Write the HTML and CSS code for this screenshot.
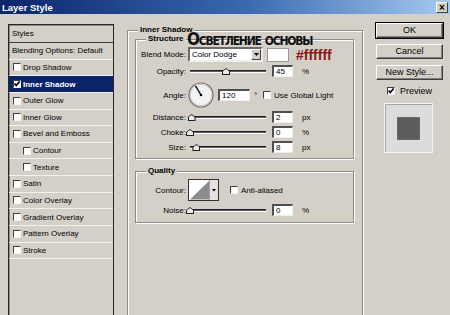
FILE: index.html
```html
<!DOCTYPE html>
<html lang="en">
<head>
    <meta charset="UTF-8">
    <title>Layer Style</title>
    <link rel="stylesheet" href="styles.css">
</head>
<body>

    <div class="titlebar">
        <span class="title">Layer Style</span>
        <span class="close-btn">&times;</span>
    </div>

    <div class="dialog">
        <div class="styles-list">
            <div class="list-head">Styles</div>
            <div class="list-row">Blending Options: Default</div>
            <div class="list-row"><span class="check"></span>Drop Shadow</div>
            <div class="list-row selected"><span class="check"><svg width="6" height="6" viewBox="0 0 6 6"><path d="M0.5 2.5 L2.3 4.6 L5.6 0.4" fill="none" stroke="#000" stroke-width="1.6"/></svg></span>Inner Shadow</div>
            <div class="list-row"><span class="check"></span>Outer Glow</div>
            <div class="list-row"><span class="check"></span>Inner Glow</div>
            <div class="list-row"><span class="check"></span>Bevel and Emboss</div>
            <div class="list-row sub"><span class="check"></span>Contour</div>
            <div class="list-row sub"><span class="check"></span>Texture</div>
            <div class="list-row"><span class="check"></span>Satin</div>
            <div class="list-row"><span class="check"></span>Color Overlay</div>
            <div class="list-row"><span class="check"></span>Gradient Overlay</div>
            <div class="list-row"><span class="check"></span>Pattern Overlay</div>
            <div class="list-row"><span class="check"></span>Stroke</div>
        </div>

        <div class="group main-group">
            <span class="group-title">Inner Shadow</span>

            <div class="group sub-group">
                <span class="group-title">Structure</span>

                <div class="form-row blend-row">
                    <span class="field-label">Blend Mode:</span>
                    <div class="select">
                        <span class="select-text">Color Dodge</span>
                        <span class="select-btn"><svg width="5" height="3" viewBox="0 0 5 3"><path d="M0 0 H5 L2.5 3 Z" fill="#000"/></svg></span>
                    </div>
                    <span class="swatch"></span>
                    <span class="hex-note">#ffffff</span>
                </div>

                <div class="form-row">
                    <span class="field-label">Opacity:</span>
                    <div class="slider"><div class="track"></div><span class="thumb" style="left: 45%"></span></div>
                    <span class="num-input">45</span>
                    <span class="unit">%</span>
                </div>

                <div class="form-row angle-row">
                    <span class="field-label">Angle:</span>
                    <svg class="dial" width="26" height="26" viewBox="0 0 26 26">
                        <circle cx="13" cy="13" r="12" fill="#f2f2f0" stroke="#707070" stroke-width="1.2"/>
                        <circle cx="13" cy="13" r="10.6" fill="none" stroke="#c8c8c8" stroke-width="0.8"/>
                        <line x1="13" y1="13" x2="7.5" y2="3.8" stroke="#000" stroke-width="1.3"/>
                        <circle cx="13" cy="13" r="1.3" fill="#000"/>
                    </svg>
                    <span class="num-input angle-input">120</span>
                    <span class="degree">&deg;</span>
                    <span class="check"></span>
                    <span class="check-label">Use Global Light</span>
                </div>

                <div class="form-row">
                    <span class="field-label">Distance:</span>
                    <div class="slider"><div class="track"></div><span class="thumb" style="left: 2%"></span></div>
                    <span class="num-input">2</span>
                    <span class="unit">px</span>
                </div>

                <div class="form-row">
                    <span class="field-label">Choke:</span>
                    <div class="slider"><div class="track"></div><span class="thumb" style="left: 0%"></span></div>
                    <span class="num-input">0</span>
                    <span class="unit">%</span>
                </div>

                <div class="form-row">
                    <span class="field-label">Size:</span>
                    <div class="slider"><div class="track"></div><span class="thumb" style="left: 8%"></span></div>
                    <span class="num-input">8</span>
                    <span class="unit">px</span>
                </div>
            </div>

            <div class="group sub-group quality-group">
                <span class="group-title">Quality</span>

                <div class="form-row contour-row">
                    <span class="field-label">Contour:</span>
                    <svg class="contour" width="31" height="22" viewBox="0 0 31 22">
                        <rect x="0.5" y="0.5" width="30" height="21" fill="#fff" stroke="#303030"/>
                        <polygon points="2,20.5 21,2 21,20.5" fill="#8c8c8c"/>
                        <rect x="22" y="1" width="8" height="20" fill="#e4e2de"/>
                        <line x1="21.5" y1="1" x2="21.5" y2="21" stroke="#a0a0a0"/>
                        <path d="M24 10 H28 L26 12.5 Z" fill="#000"/>
                    </svg>
                    <span class="check"></span>
                    <span class="check-label">Anti-aliased</span>
                </div>

                <div class="form-row">
                    <span class="field-label">Noise:</span>
                    <div class="slider"><div class="track"></div><span class="thumb" style="left: 0%"></span></div>
                    <span class="num-input">0</span>
                    <span class="unit">%</span>
                </div>
            </div>
        </div>

        <div class="actions">
            <div class="button default-button">OK</div>
            <div class="button">Cancel</div>
            <div class="button">New Style...</div>
            <div class="preview-toggle">
                <span class="check"><svg width="6" height="6" viewBox="0 0 6 6"><path d="M0.5 2.5 L2.3 4.6 L5.6 0.4" fill="none" stroke="#000" stroke-width="1.6"/></svg></span>
                <span>Preview</span>
            </div>
            <div class="preview-box">
                <div class="preview-square"></div>
            </div>
        </div>
    </div>

    <div class="annotation">Осветление основы</div>

</body>
</html>
```

FILE: styles.css
```css
body {
    margin: 0;
    width: 450px;
    height: 315px;
    overflow: hidden;
    position: relative;
    background-color: #d4d0c8;
    color: #000;
    font-family: "Liberation Sans", Arial, sans-serif;
    font-size: 8px;
}

.titlebar {
    height: 14px;
    display: flex;
    align-items: center;
    justify-content: space-between;
    padding: 0 2px;
    background: linear-gradient(to right, #0a246a, #3a6ab0 55%, #a6caf0);
}

.title {
    color: white;
    font-weight: bold;
    font-size: 9.5px;
}

.close-btn {
    width: 10px;
    height: 9px;
    line-height: 9px;
    text-align: center;
    font-size: 10px;
    font-weight: bold;
    background-color: #d4d0c8;
    border: 1px solid;
    border-color: #fff #404040 #404040 #fff;
}

.dialog {
    display: flex;
    align-items: flex-start;
}

/* left list of effects */
.styles-list {
    margin: 10px 0 0 8px;
    width: 104px;
    height: 290px;
    border: 1px solid #262626;
    border-bottom: none;
    box-shadow: inset 1px 1px 0 #8a8a8a;
}

.list-head {
    height: 17px;
    line-height: 17px;
    padding-left: 3px;
    border-bottom: 1px solid #3a3a3a;
}

.list-row {
    height: 15.64px;
    display: flex;
    align-items: center;
    padding-left: 3px;
    border-bottom: 1px solid #f2f0ec;
    white-space: nowrap;
}

.list-row .check {
    margin: 0 2px 0 1px;
}

.list-row.sub {
    padding-left: 13px;
}

.list-row.selected {
    background-color: #0a246a;
    color: white;
    font-weight: bold;
}

.check {
    width: 6px;
    height: 6px;
    flex-shrink: 0;
    display: inline-flex;
    background-color: #fff;
    border: 1px solid;
    border-color: #404040 #f4f4f4 #f4f4f4 #404040;
}

/* group boxes */
.group {
    display: flex;
    flex-direction: column;
    align-items: flex-start;
    border: 1px solid #8a8a8a;
    box-shadow: 1px 1px 0 #fff, inset 1px 1px 0 #fff;
}

.group-title {
    display: inline-block;
    height: 10px;
    line-height: 10px;
    margin: -6px 0 0 10px;
    padding: 0 2px;
    background-color: #d4d0c8;
    font-weight: bold;
}

.main-group {
    margin: 16px 0 0 13px;
    width: 234px;
    height: 284px;
    border-bottom: none;
}

.sub-group {
    align-self: stretch;
    margin: 4px 8px 0 7px;
    padding-bottom: 5px;
    gap: 3px;
}

.quality-group {
    margin-top: 12px;
    padding-bottom: 6px;
}

.form-row {
    display: flex;
    align-items: center;
    height: 12px;
    white-space: nowrap;
}

.blend-row {
    height: 15px;
}

.angle-row {
    height: 26px;
    margin-top: 2px;
}

.contour-row {
    height: 22px;
}

.field-label {
    width: 50px;
    margin-right: 2px;
    text-align: right;
}

.select {
    width: 71px;
    height: 11px;
    display: flex;
    align-items: center;
    justify-content: space-between;
    background-color: #fff;
    border: 2px solid;
    border-color: #6a6a6a #eee #eee #6a6a6a;
}

.select-text {
    padding-left: 2px;
}

.select-btn {
    width: 10px;
    height: 11px;
    box-sizing: border-box;
    display: flex;
    align-items: center;
    justify-content: center;
    background-color: #d4d0c8;
    border: 1px solid;
    border-color: #fff #404040 #404040 #fff;
}

.swatch {
    width: 20px;
    height: 12px;
    margin-left: 4px;
    background-color: #fff;
    border: 1px solid #9a9a9a;
}

.hex-note {
    margin-left: 7px;
    color: #8b1a1a;
    font-size: 14px;
    font-weight: bold;
}

.slider {
    position: relative;
    width: 80px;
    height: 12px;
    display: flex;
    align-items: center;
}

.track {
    width: 76px;
    margin-left: 2px;
    height: 1px;
    background-color: #606060;
    border-top: 1px solid #202020;
    border-bottom: 1px solid #fff;
}

.thumb {
    position: absolute;
    top: 3px;
    width: 8px;
    height: 7px;
    margin-left: -2px;
    background-color: #202020;
    clip-path: polygon(0 100%, 0 45%, 50% 0, 100% 45%, 100% 100%);
}

.thumb::after {
    content: "";
    position: absolute;
    inset: 1px;
    background-color: #ecebe6;
    clip-path: polygon(0 100%, 0 45%, 50% 0, 100% 45%, 100% 100%);
}

.num-input {
    width: 16px;
    height: 9px;
    line-height: 9px;
    margin-left: 4px;
    padding-left: 2px;
    background-color: #fff;
    border: 1px solid;
    border-width: 2px 1px 1px 2px;
    border-color: #505050 #eee #eee #505050;
}

.unit {
    margin-left: 9px;
}

.angle-input {
    width: 27px;
    margin-left: 4px;
}

.degree {
    margin-left: 4px;
    width: 6px;
}

.angle-row .check {
    margin-left: 3px;
}

.check-label {
    margin-left: 3px;
}

.contour-row .check {
    margin-left: 11px;
}

/* buttons column */
.actions {
    margin: 9px 0 0 13px;
    width: 67px;
    display: flex;
    flex-direction: column;
    gap: 6px;
}

.button {
    height: 13px;
    line-height: 13px;
    text-align: center;
    font-size: 9px;
    background-color: #d4d0c8;
    border: 1px solid;
    border-color: #fff #404040 #404040 #fff;
    box-shadow: inset -1px -1px 0 #808080;
}

.default-button {
    outline: 1px solid #000;
}

.preview-toggle {
    display: flex;
    align-items: center;
    gap: 5px;
    margin: 0 0 0 11px;
    font-size: 9px;
}

.preview-box {
    width: 47px;
    height: 48px;
    margin: 1px 0 0 8px;
    display: flex;
    align-items: center;
    justify-content: center;
    background-color: #dcdcdc;
    border: 1px solid #f4f2ec;
    box-shadow: inset 1px 1px 0 #a8a8a8;
}

.preview-square {
    width: 23px;
    height: 23px;
    background-color: #5c5c5c;
    box-shadow: inset 0 0 2px #8a8a8a;
}

/* annotation written over the screenshot */
.annotation {
    position: absolute;
    left: 187px;
    top: 31px;
    font-family: "Liberation Sans Narrow", "DejaVu Sans Condensed", "Liberation Sans", sans-serif;
    font-size: 17px;
    font-weight: bold;
    font-variant: small-caps;
    letter-spacing: -1.2px;
    line-height: 17px;
    color: #111;
}
```
